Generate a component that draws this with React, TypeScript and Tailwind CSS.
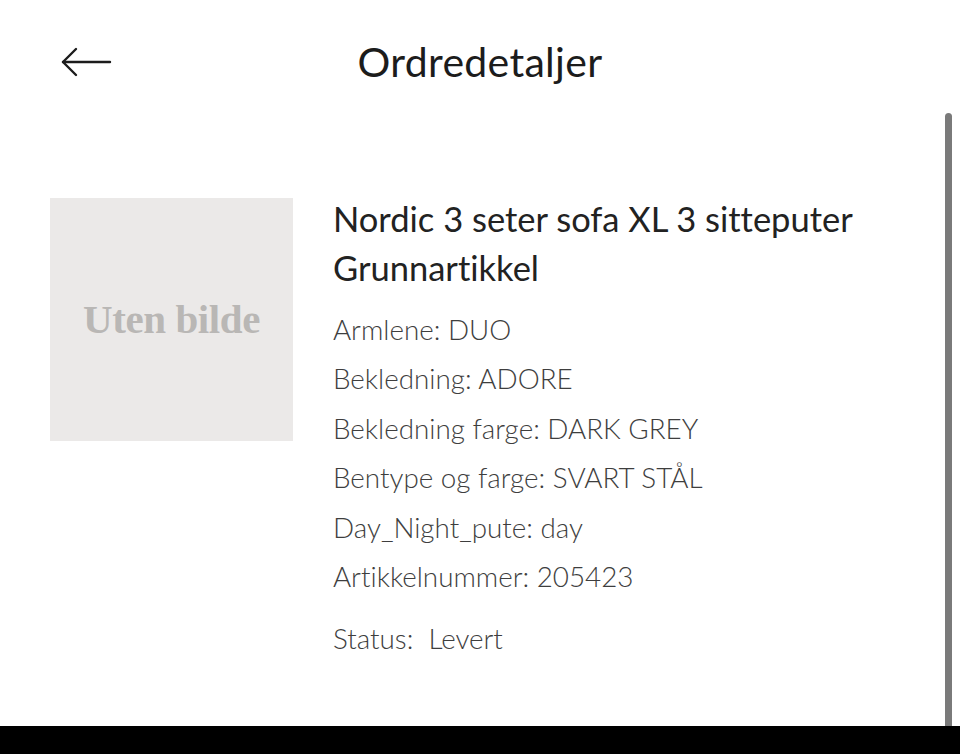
const attributes = [
  { label: 'Armlene', value: 'DUO' },
  { label: 'Bekledning', value: 'ADORE' },
  { label: 'Bekledning farge', value: 'DARK GREY' },
  { label: 'Bentype og farge', value: 'SVART STÅL' },
  { label: 'Day_Night_pute', value: 'day' },
  { label: 'Artikkelnummer', value: '205423' },
];

export default function App() {
  return (
    <div className="h-[754px] w-[960px] flex flex-col bg-white font-['Lato','Open_Sans',sans-serif] [font-variant-ligatures:none] overflow-hidden">
      <div className="relative flex-1 bg-white">
        {/* Header */}
        <header className="relative h-[125px] flex items-start justify-center pt-[34px]">
          <button className="absolute left-[60px] top-[46px] text-[#1c1c1c]" aria-label="Tilbake">
            <svg width="52" height="32" viewBox="0 0 52 32" fill="none" stroke="currentColor" strokeWidth={2.4} strokeLinecap="round" strokeLinejoin="round">
              <path d="M50 16H3" />
              <path d="M16 3L3 16l13 13" />
            </svg>
          </button>
          <h1 className="text-[41px] leading-[56px] text-[#1c1c1c] tracking-[0.3px]">Ordredetaljer</h1>
        </header>

        {/* Content */}
        <main className="flex gap-[40px] pl-[50px] pr-[60px] pt-[73px]">
          <div className="w-[243px] h-[243px] shrink-0 bg-[#ebe9e8] flex items-center justify-center">
            <span className="font-['Liberation_Serif','DejaVu_Serif',serif] font-bold text-[41px] text-[#b9b7b5] tracking-[-0.4px]">
              Uten bilde
            </span>
          </div>
          <div className="flex flex-col -mt-[4px]">
            <h2 className="text-[34.5px] leading-[49px] text-[#222222]">
              Nordic 3 seter sofa XL 3 sitteputer
              <br />
              Grunnartikkel
            </h2>
            <ul className="mt-[13px] flex flex-col">
              {attributes.map((a) => (
                <li key={a.label} className="text-[27.8px] leading-[49.4px] font-light text-[#3e3e3e]">
                  {a.label}: {a.value}
                </li>
              ))}
            </ul>
            <p className="mt-[13px] text-[27.8px] leading-[49px] font-light text-[#3e3e3e]">
              Status:&nbsp; Levert
            </p>
          </div>
        </main>

        {/* Scrollbar */}
        <div className="absolute right-[8px] top-[113px] bottom-0 w-[7px] rounded-t-full bg-[#7a7a7a]" />
      </div>
      <div className="h-[28px] bg-black" />
    </div>
  );
}
